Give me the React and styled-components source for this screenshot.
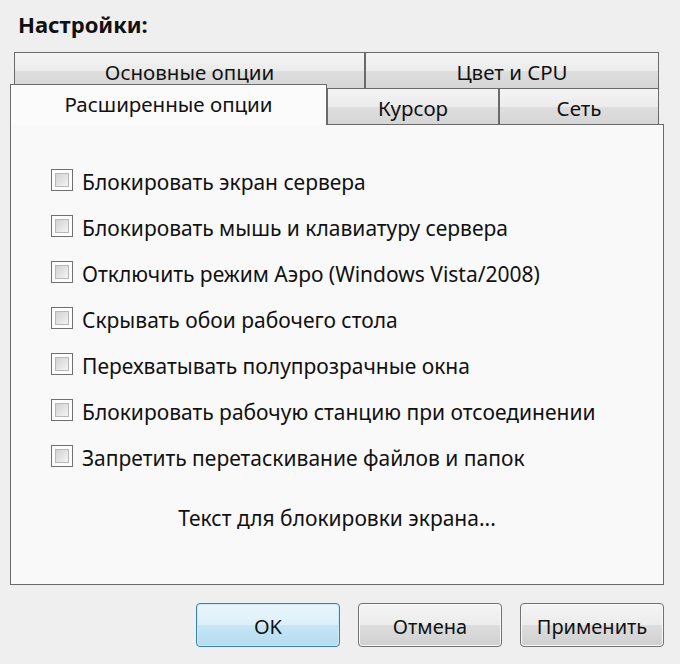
import styled, { createGlobalStyle } from "styled-components";

const GlobalStyle = createGlobalStyle`
  html, body {
    margin: 0;
    padding: 0;
    background: #efefef;
  }
  body {
    font-family: "Noto Sans", "DejaVu Sans", sans-serif;
    color: #111;
  }
`;

const options = [
  "Блокировать экран сервера",
  "Блокировать мышь и клавиатуру сервера",
  "Отключить режим Аэро (Windows Vista/2008)",
  "Скрывать обои рабочего стола",
  "Перехватывать полупрозрачные окна",
  "Блокировать рабочую станцию при отсоединении",
  "Запретить перетаскивание файлов и папок",
];

export default function App() {
  return (
    <>
      <GlobalStyle />
      <Dialog>
        <Title>Настройки:</Title>
        <Tabs>
          <TabRow>
            <Tab $w={351} $h={36}>Основные опции</Tab>
            <Tab $w={294} $h={36}>Цвет и CPU</Tab>
          </TabRow>
          <TabRowFront>
            <ActiveTab>Расширенные опции</ActiveTab>
            <Tab $w={172} $h={36}>Курсор</Tab>
            <Tab $w={160} $h={36}>Сеть</Tab>
          </TabRowFront>
          <Panel>
            <OptionList>
              {options.map((o) => (
                <Option key={o}>
                  <CheckBox />
                  <span>{o}</span>
                </Option>
              ))}
            </OptionList>
            <LockText>Текст для блокировки экрана...</LockText>
          </Panel>
        </Tabs>
        <Footer>
          <Button $primary>OK</Button>
          <Button>Отмена</Button>
          <Button>Применить</Button>
        </Footer>
      </Dialog>
    </>
  );
}

const Dialog = styled.div`
  width: 680px;
  height: 664px;
  box-sizing: border-box;
  padding-top: 10px;
  display: flex;
  flex-direction: column;
`;

const Title = styled.div`
  font-size: 22px;
  font-weight: 700;
  line-height: 28px;
  padding-left: 18px;
  color: #111;
`;

const Tabs = styled.div`
  margin-top: 14px;
  margin-left: 10px;
  width: 654px;
  display: flex;
  flex-direction: column;
`;

const TabRow = styled.div`
  display: flex;
  margin-left: 4px;
  height: 36px;
`;

const TabRowFront = styled.div`
  display: flex;
  align-items: flex-end;
  height: 40px;
  margin-top: -4px;
`;

const Tab = styled.div`
  width: ${({ $w }) => $w}px;
  height: ${({ $h }) => $h}px;
  box-sizing: border-box;
  border: 1px solid #6a6a6a;
  border-bottom: none;
  background: linear-gradient(
    to bottom,
    #f4f4f4 0%,
    #ececec 50%,
    #dedede 51%,
    #d6d6d6 100%
  );
  display: flex;
  align-items: center;
  justify-content: center;
  font-size: 20.5px;
  color: #111;
  padding-top: 2px;
`;

const ActiveTab = styled.div`
  position: relative;
  z-index: 1;
  width: 317px;
  height: 41px;
  margin-bottom: -1px;
  box-sizing: border-box;
  border: 1px solid #6a6a6a;
  border-bottom: none;
  background: #fbfbfb;
  display: flex;
  justify-content: center;
  padding-top: 5px;
  font-size: 20.5px;
  color: #111;
`;

const Panel = styled.div`
  height: 461px;
  box-sizing: border-box;
  border: 1px solid #6a6a6a;
  background: #f9f9f9;
  display: flex;
  flex-direction: column;
  padding: 32px 0 0 40px;
`;

const OptionList = styled.div`
  display: flex;
  flex-direction: column;
`;

const Option = styled.div`
  display: flex;
  align-items: center;
  gap: 9px;
  height: 46px;
  font-size: 21px;
  color: #111;
  span {
    padding-top: 3px;
  }
`;

const CheckBox = styled.div`
  width: 22px;
  height: 22px;
  box-sizing: border-box;
  border: 1px solid #6f6f6f;
  background: #fdfdfd;
  padding: 3px;
  flex-shrink: 0;
  &::after {
    content: "";
    display: block;
    width: 100%;
    height: 100%;
    box-sizing: border-box;
    border: 1px solid #b8b8b8;
    background: linear-gradient(135deg, #d2d2d2 0%, #e6e6e6 60%, #f4f4f4 100%);
  }
`;

const LockText = styled.div`
  margin-top: 25px;
  margin-left: -40px;
  text-align: center;
  font-size: 21px;
  color: #111;
`;

const Footer = styled.div`
  display: flex;
  justify-content: flex-end;
  gap: 18px;
  padding-right: 16px;
  margin-top: 18px;
`;

const Button = styled.div`
  width: 144px;
  height: 44px;
  box-sizing: border-box;
  border-radius: 4px;
  border: 1px solid ${({ $primary }) => ($primary ? "#3c7fb1" : "#707070")};
  box-shadow: inset 0 0 0 1px
    ${({ $primary }) => ($primary ? "#c8ecfb" : "#fbfbfb")};
  background: ${({ $primary }) =>
    $primary
      ? "linear-gradient(to bottom, #e9f5fb 0%, #dcf0fa 50%, #c5e6f5 51%, #b6dcee 100%)"
      : "linear-gradient(to bottom, #f4f4f4 0%, #ececec 50%, #dddddd 51%, #d0d0d0 100%)"};
  display: flex;
  align-items: center;
  justify-content: center;
  font-size: 20px;
  color: #111;
  padding-top: 2px;
`;
